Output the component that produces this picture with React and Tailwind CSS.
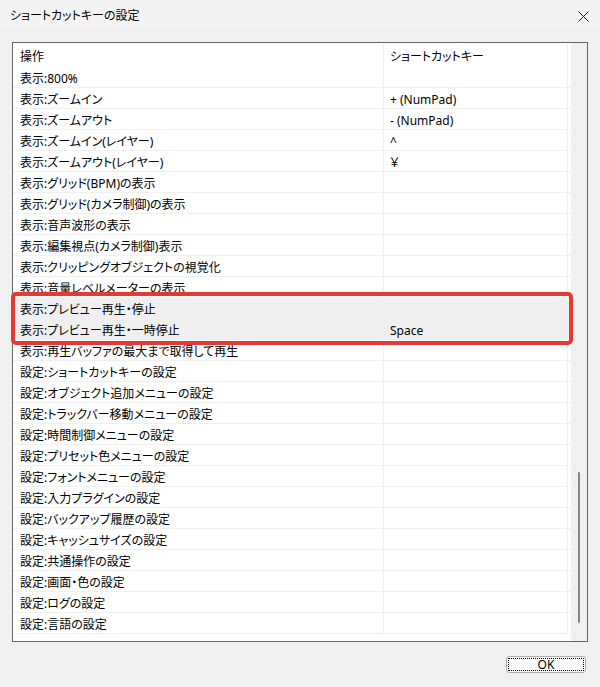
const rows = [
  ['表示:800%', ''],
  ['表示:ズームイン', '+ (NumPad)'],
  ['表示:ズームアウト', '- (NumPad)'],
  ['表示:ズームイン(レイヤー)', '^'],
  ['表示:ズームアウト(レイヤー)', '￥'],
  ['表示:グリッド(BPM)の表示', ''],
  ['表示:グリッド(カメラ制御)の表示', ''],
  ['表示:音声波形の表示', ''],
  ['表示:編集視点(カメラ制御)表示', ''],
  ['表示:クリッピングオブジェクトの視覚化', ''],
  ['表示:音量レベルメーターの表示', ''],
  ['表示:プレビュー再生・停止', '', true],
  ['表示:プレビュー再生・一時停止', 'Space', true],
  ['表示:再生バッファの最大まで取得して再生', ''],
  ['設定:ショートカットキーの設定', ''],
  ['設定:オブジェクト追加メニューの設定', ''],
  ['設定:トラックバー移動メニューの設定', ''],
  ['設定:時間制御メニューの設定', ''],
  ['設定:プリセット色メニューの設定', ''],
  ['設定:フォントメニューの設定', ''],
  ['設定:入力プラグインの設定', ''],
  ['設定:バックアップ履歴の設定', ''],
  ['設定:キャッシュサイズの設定', ''],
  ['設定:共通操作の設定', ''],
  ['設定:画面・色の設定', ''],
  ['設定:ログの設定', ''],
  ['設定:言語の設定', ''],
]

export default function App() {
  return (
    <div className="w-[600px] h-[687px] bg-[#f0f0f0] flex flex-col text-[12px] text-black font-['Noto_Sans','Noto_Sans_CJK_JP',sans-serif] [font-feature-settings:'palt']">
      {/* title bar */}
      <div className="h-[30px] bg-[#f3f3f3] flex items-center justify-between pl-[10px] pr-[10px] pt-[2px]">
        <span className="leading-none">ショートカットキーの設定</span>
        <svg width="11" height="11" viewBox="0 0 11 11" className="mr-[1px]">
          <path d="M0.5 0.5 L10.5 10.5 M10.5 0.5 L0.5 10.5" stroke="#1a1a1a" strokeWidth="1" />
        </svg>
      </div>

      <div className="px-[12px] pt-[12px]">
        <div className="relative h-[600px] w-[576px] border border-[#646464] flex">
          {/* list */}
          <div className="w-[558px] bg-white flex flex-col">
            <div className="h-[24px] flex shrink-0">
              <div className="w-[370px] pl-[7px] pt-[4px] flex items-center">操作</div>
              <div className="w-[185px] border-l border-r border-[#f0f0f0] pl-[6px] pt-[4px] flex items-center">ショートカットキー</div>
            </div>
            {rows.map(([name, key, sel], i) => (
              <div key={i} className={`h-[21px] flex shrink-0 border-b border-[#f0f0f0] ${sel ? 'bg-[#efefef]' : ''}`}>
                <div className="w-[370px] pl-[7px] pt-[4px] flex items-center">{name}</div>
                <div className="w-[185px] border-l border-r border-[#f0f0f0] pl-[6px] pt-[4px] flex items-center">{key}</div>
              </div>
            ))}
          </div>
          {/* scrollbar */}
          <div className="w-[16px] bg-[#f0f0f0] flex flex-col items-center">
            <div className="mt-[429px] h-[151px] w-[2px] rounded-full bg-[#858585]" />
          </div>

          {/* annotation box */}
          <div className="absolute left-[-2px] top-[249px] w-[562px] h-[53px] border-[4px] border-[#e53935] rounded-[5px]" />
        </div>
      </div>

      <div className="flex justify-end pr-[14px] pt-[14px]">
        <button className="w-[80px] h-[17px] bg-[#fdfdfd] border border-[#adadad] rounded-[3px] p-[1px] flex">
          <span className="flex-1 border border-dotted border-black flex items-center justify-center leading-none">OK</span>
        </button>
      </div>
    </div>
  )
}
